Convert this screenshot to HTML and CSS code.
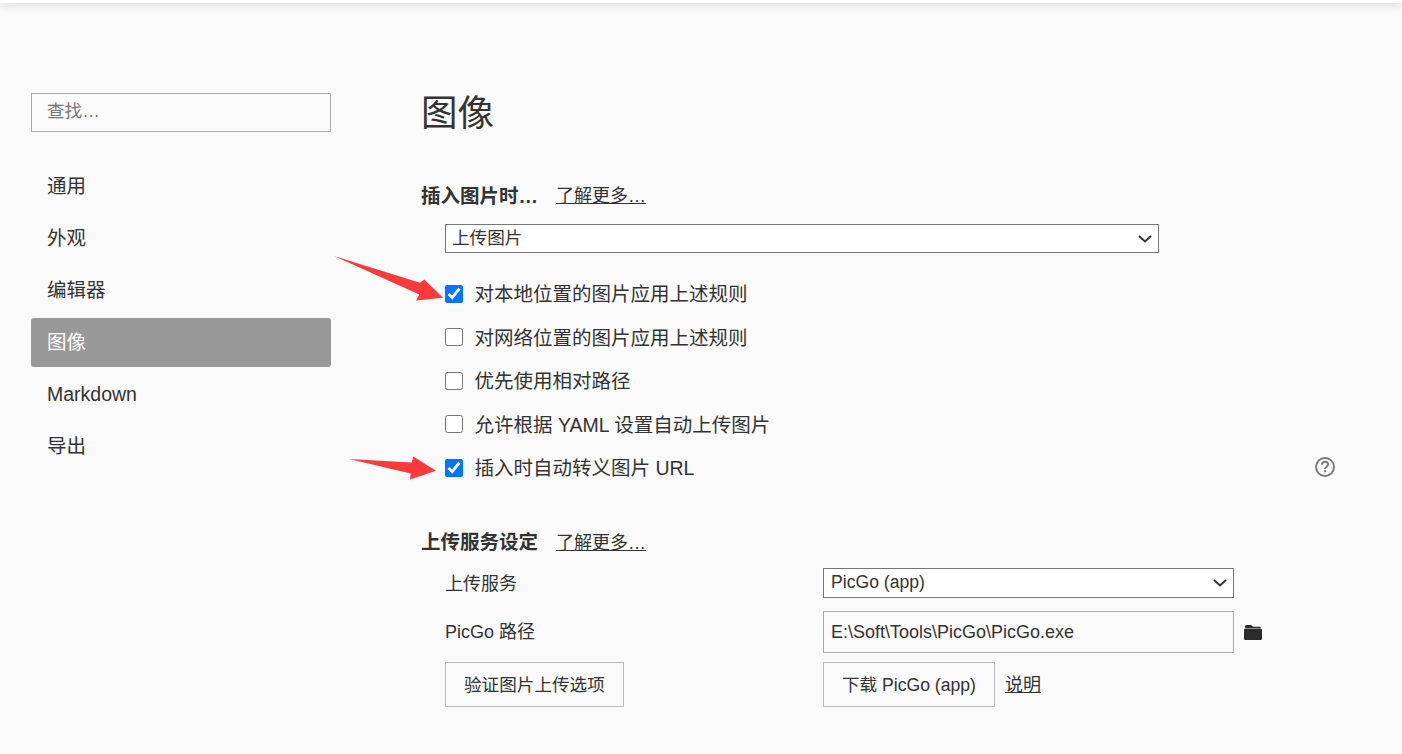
FILE: index.html
```html
<!DOCTYPE html>
<html lang="zh-CN">
<head>
  <meta charset="UTF-8">
  <meta name="viewport" content="width=device-width, initial-scale=1.0">
  <title>偏好设置</title>
  <link rel="stylesheet" href="styles.css">
</head>
<body>
  <div class="top-edge"></div>

  <div class="prefs">
    <!-- Sidebar -->
    <aside class="sidebar">
      <input class="search" type="text" placeholder="查找…">
      <nav class="nav">
        <a class="nav-item">通用</a>
        <a class="nav-item">外观</a>
        <a class="nav-item">编辑器</a>
        <a class="nav-item active">图像</a>
        <a class="nav-item">Markdown</a>
        <a class="nav-item">导出</a>
      </nav>
    </aside>

    <!-- Image settings -->
    <main class="content">
      <h1>图像</h1>

      <div class="section-head">
        <h2>插入图片时…</h2>
        <a class="link">了解更多…</a>
      </div>
      <select class="select insert-select">
        <option>上传图片</option>
      </select>

      <div class="checks">
        <label class="check"><input type="checkbox" checked><span>对本地位置的图片应用上述规则</span></label>
        <label class="check"><input type="checkbox"><span>对网络位置的图片应用上述规则</span></label>
        <label class="check"><input type="checkbox"><span>优先使用相对路径</span></label>
        <label class="check"><input type="checkbox"><span>允许根据 YAML 设置自动上传图片</span></label>
        <label class="check"><input type="checkbox" checked><span>插入时自动转义图片 URL</span>
          <svg class="help" viewBox="0 0 20 20" width="20" height="20">
            <circle cx="10" cy="10" r="9" fill="none" stroke="#777" stroke-width="1.9"/>
            <path d="M6.9 7.7c0-1.9 1.4-3 3.2-3 1.7 0 3 1.1 3 2.6 0 2.4-3 2.4-3 4.8" fill="none" stroke="#777" stroke-width="1.9"/>
            <rect x="9.1" y="13.3" width="2" height="2" fill="#777"/>
          </svg>
        </label>
      </div>

      <div class="section-head upload-head">
        <h2>上传服务设定</h2>
        <a class="link">了解更多…</a>
      </div>

      <div class="service-grid">
        <span class="field-label">上传服务</span>
        <select class="select service-select">
          <option>PicGo (app)</option>
        </select>

        <span class="field-label path-label">PicGo 路径</span>
        <div class="path-row">
          <input class="path-input" type="text" value="E:\Soft\Tools\PicGo\PicGo.exe">
          <svg class="folder" viewBox="0 0 18 15" width="18" height="15">
            <path d="M1 2.6V1.5C1 .7 1.7 0 2.5 0h4.2c.5 0 .9.2 1.2.6l1 1.2h6.6c.8 0 1.5.5 1.5 1.1H1.6z" fill="#2b2b2b"/>
            <path d="M0 5c0-1 .7-1.6 1.6-1.6h14.8c.9 0 1.6.6 1.6 1.6v8.4c0 .9-.7 1.6-1.6 1.6H1.6C.7 15 0 14.3 0 13.4z" fill="#2b2b2b"/>
          </svg>
        </div>

        <div><button class="btn">验证图片上传选项</button></div>
        <div class="download-row">
          <button class="btn">下载 PicGo (app)</button>
          <a class="link note-link">说明</a>
        </div>
      </div>
    </main>
  </div>

  <!-- Red annotation arrows -->
  <svg class="arrow arrow-one" viewBox="0 0 110 48" width="110" height="48">
    <path d="M0 0L86 26.8L90.3 23.5L109 41.7L82 44.5L85.3 38.5z" fill="#fc3a3a"/>
  </svg>
  <svg class="arrow arrow-two" viewBox="0 0 94 26" width="94" height="26">
    <path d="M0 3L62.7 6.4L64.3 .4L87 14.7L61 23.5L61.7 17.6z" fill="#fc3a3a"/>
  </svg>
</body>
</html>
```

FILE: styles.css
```css
html, body {
  height: 100%;
}

body {
  margin: 0;
  padding: 0;
  overflow: hidden;
  position: relative;
  background: #fafafa;
  color: #333;
  font-family: "Liberation Sans", "Noto Sans CJK SC", sans-serif;
  font-size: 16px;
}

.top-edge {
  height: 3px;
  background: #fff;
  box-shadow: 0 1px 8px rgba(0, 0, 0, 0.25);
}

.prefs {
  display: flex;
  padding: 90px 0 0 31px;
}

/* Sidebar */
.sidebar {
  width: 300px;
  flex-shrink: 0;
}

.search {
  display: block;
  width: 100%;
  height: 39px;
  padding: 0 15px 2px;
  box-sizing: border-box;
  border: 1px solid #aaa;
  background: transparent;
  font: inherit;
  font-size: 17.6px;
  outline: none;
}

.search::placeholder {
  color: #777;
}

.nav {
  display: flex;
  flex-direction: column;
  gap: 3px;
  margin-top: 30px;
}

.nav-item {
  display: block;
  height: 49px;
  line-height: 49px;
  padding-left: 16px;
  font-size: 19.5px;
  border-radius: 3px;
}

.nav-item.active {
  background: #999;
  color: #fff;
}

/* Main column */
.content {
  width: 914px;
  margin-left: 90px;
}

h1 {
  margin: 0;
  height: 43px;
  line-height: 41px;
  font-size: 36.5px;
  font-weight: 400;
}

.section-head {
  display: flex;
  align-items: center;
  gap: 18px;
  height: 28px;
  margin-top: 44px;
}

h2 {
  margin: 0;
  font-size: 19.5px;
  font-weight: 700;
}

.link {
  font-size: 18px;
  color: #333;
  text-decoration: underline;
}

.select {
  display: block;
  height: 29px;
  padding: 0 24px 2px 6px;
  box-sizing: border-box;
  appearance: none;
  border: 1px solid #767676;
  border-radius: 0;
  background: #fff url("data:image/svg+xml,%3Csvg xmlns='http://www.w3.org/2000/svg' width='14' height='8'%3E%3Cpath d='M1 1l6 5.4L13 1' fill='none' stroke='%23333' stroke-width='2'/%3E%3C/svg%3E") no-repeat right 6px center;
  color: #333;
  font: inherit;
  font-size: 17.6px;
}

.insert-select {
  width: 714px;
  margin: 16px 0 0 24px;
}

.checks {
  display: flex;
  flex-direction: column;
  margin: 19px 0 0 24px;
}

.check {
  display: flex;
  align-items: center;
  height: 43.5px;
  font-size: 19.5px;
}

.check input {
  width: 18px;
  height: 18px;
  margin: 0 11.5px 0 0;
  accent-color: #0075ff;
}

.check span {
  margin-bottom: 2px;
}

.help {
  margin: 0 0 2px auto;
}

.upload-head {
  margin-top: 37px;
}

/* Upload service fields */
.service-grid {
  display: grid;
  grid-template-columns: 378px 1fr;
  row-gap: 9px;
  align-items: center;
  margin: 13px 0 0 24px;
}

.field-label {
  margin-bottom: 2px;
  font-size: 18px;
}

.path-label {
  padding-top: 2px;
}

.service-select {
  width: 411px;
  height: 30px;
  padding-left: 7px;
}

.path-row {
  display: flex;
  align-items: center;
  gap: 10px;
  margin-top: 4px;
}

.path-input {
  width: 411px;
  height: 42px;
  padding: 2px 7px 0;
  box-sizing: border-box;
  border: 1px solid #aaa;
  background: transparent;
  color: #333;
  font: inherit;
  font-size: 18px;
  outline: none;
}

.folder {
  margin-top: 1px;
}

.download-row {
  display: flex;
  align-items: center;
  gap: 10px;
}

.note-link {
  margin-bottom: 2px;
}

.btn {
  height: 45px;
  padding: 0 18px 2px;
  border: 1px solid #bbb;
  border-radius: 0;
  background: #fafafa;
  color: #333;
  font: inherit;
  font-size: 17.6px;
}

/* Annotations */
.arrow {
  position: absolute;
}

.arrow-one {
  left: 334px;
  top: 256px;
}

.arrow-two {
  left: 349px;
  top: 456px;
}
```
